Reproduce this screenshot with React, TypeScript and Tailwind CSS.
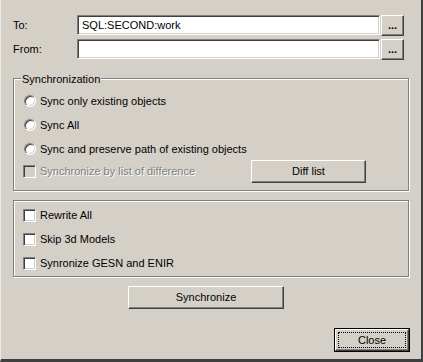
import type { ReactNode } from "react";

const raised =
  "border border-t-white border-l-white border-r-[#404040] border-b-[#404040] shadow-[inset_-1px_-1px_0_#808080]";
const sunken =
  "border border-t-[#808080] border-l-[#808080] border-r-white border-b-white shadow-[inset_1px_1px_0_#404040,inset_-1px_-1px_0_#d4d0c8]";
const etched = "border border-[#808080] shadow-[inset_1px_1px_0_#fff,1px_1px_0_#fff]";

function Button({ className, children }: { className: string; children: ReactNode }) {
  return (
    <div className={`flex items-center justify-center bg-[#d4d0c8] ${raised} ${className}`}>
      {children}
    </div>
  );
}

function Radio({ label }: { label: string }) {
  return (
    <div className="flex h-6 items-center">
      <span
        className={`ml-px h-3 w-3 rounded-full bg-white border border-t-[#808080] border-l-[#808080] border-r-white border-b-white shadow-[inset_1px_1px_0_#404040,inset_-1px_-1px_0_#d4d0c8]`}
      />
      <span className="ml-1">{label}</span>
    </div>
  );
}

function Check({ label, disabled }: { label: string; disabled?: boolean }) {
  return (
    <div className="flex items-center">
      <span className={`h-[13px] w-[13px] ${sunken} ${disabled ? "bg-[#d4d0c8]" : "bg-white"}`} />
      <span
        className={`ml-1 ${disabled ? "text-[#808080] [text-shadow:1px_1px_0_#fff]" : ""}`}
      >
        {label}
      </span>
    </div>
  );
}

function PathRow({ label, value }: { label: string; value?: string }) {
  return (
    <div className="flex items-start">
      <span className="w-[64px] pt-[4px]">{label}</span>
      <div className={`flex h-[20px] w-[303px] items-center bg-white pl-[4px] ${sunken}`}>
        {value}
      </div>
      <Button className="ml-px h-[21px] w-[23px] font-bold leading-none">...</Button>
    </div>
  );
}

export default function App() {
  return (
    <div className="h-[362px] w-[423px] border-l border-r-2 border-b-[3px] border-l-[#ebe9e4] border-r-[#404040] border-b-[#404040] bg-[#d4d0c8] pl-[12px] pt-[15px] font-['Liberation_Sans',Arial,sans-serif] text-[11px] leading-[13px] text-black">
      <PathRow label="To:" value="SQL:SECOND:work" />
      <div className="mt-[3px]">
        <PathRow label="From:" />
      </div>

      <div className={`relative mt-[18px] h-[113px] w-[396px] pl-[9px] pt-[10px] ${etched}`}>
        <span className="absolute -top-[6px] left-[7px] bg-[#d4d0c8] px-px">Synchronization</span>
        <Radio label="Sync only existing objects" />
        <Radio label="Sync All" />
        <Radio label="Sync and preserve path of existing objects" />
        <div className="flex h-[20px] items-center">
          <div className="w-[228px]">
            <Check label="Synchronize by list of difference" disabled />
          </div>
          <Button className="h-[23px] w-[115px]">Diff list</Button>
        </div>
      </div>

      <div className={`mt-[9px] h-[77px] w-[396px] pl-[9px] pt-[2px] ${etched}`}>
        <div className="flex h-6 items-center">
          <Check label="Rewrite All" />
        </div>
        <div className="flex h-6 items-center">
          <Check label="Skip 3d Models" />
        </div>
        <div className="flex h-6 items-center">
          <Check label="Synronize GESN and ENIR" />
        </div>
      </div>

      <Button className="ml-[115px] mt-[9px] h-[23px] w-[156px]">Synchronize</Button>

      <div className="ml-[321px] mt-[19px] flex h-[24px] w-[76px] border border-black">
        <div className={`flex flex-1 p-[2px] ${raised}`}>
          <div className="flex flex-1 items-center justify-center border border-dotted border-black">
            Close
          </div>
        </div>
      </div>
    </div>
  );
}
